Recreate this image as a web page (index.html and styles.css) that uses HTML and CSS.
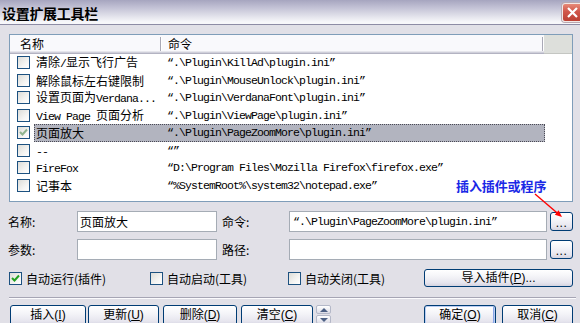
FILE: index.html
```html
<!DOCTYPE html>
<html>
<head>
<meta charset="utf-8">
<link rel="stylesheet" href="styles.css">
</head>
<body>
<div class="win">
  <div class="titlebar">
    <span class="title">设置扩展工具栏</span>
    <span class="close"><svg width="19" height="17" viewBox="0 0 19 17"><path d="M5 4 L14 13 M14 4 L5 13" stroke="#fff" stroke-width="2.2" fill="none"/></svg></span>
  </div>
  <div class="main">
    <div class="list">
      <div class="lhead">
        <div class="hc h1">名称</div>
        <div class="hsep"></div>
        <div class="hc h2">命令</div>
        <div class="hsep"></div>
        <div class="hfill"></div>
      </div>
      <div class="row"><span class="cb"></span><span class="item"><span class="nm">清除<span class="en">/</span>显示飞行广告</span><span class="cmd">“.\Plugin\KillAd\plugin.ini”</span></span></div>
      <div class="row"><span class="cb"></span><span class="item"><span class="nm">解除鼠标左右键限制</span><span class="cmd">“.\Plugin\MouseUnlock\plugin.ini”</span></span></div>
      <div class="row"><span class="cb"></span><span class="item"><span class="nm">设置页面为<span class="en">Verdana...</span></span><span class="cmd">“.\Plugin\VerdanaFont\plugin.ini”</span></span></div>
      <div class="row"><span class="cb"></span><span class="item"><span class="nm"><span class="en">View Page </span>页面分析</span><span class="cmd">“.\Plugin\ViewPage\plugin.ini”</span></span></div>
      <div class="row"><span class="cb cb-sel"><svg width="11" height="11" viewBox="0 0 11 11"><path d="M2 5 L4.5 7.5 L9 2.5" stroke="#8fb48f" stroke-width="2" fill="none"/></svg></span><span class="item selected"><span class="nm">页面放大</span><span class="cmd">“.\Plugin\PageZoomMore\plugin.ini”</span></span></div>
      <div class="row"><span class="cb"></span><span class="item"><span class="nm"><span class="en">--</span></span><span class="cmd">“”</span></span></div>
      <div class="row"><span class="cb"></span><span class="item"><span class="nm"><span class="en">FireFox</span></span><span class="cmd">“D:\Program Files\Mozilla Firefox\firefox.exe”</span></span></div>
      <div class="row"><span class="cb"></span><span class="item"><span class="nm">记事本</span><span class="cmd">“%SystemRoot%\system32\notepad.exe”</span></span></div>
    </div>

    <div class="frow first">
      <span class="lbl lbl1">名称:</span>
      <span class="input in1">页面放大</span>
      <span class="lbl lbl2">命令:</span>
      <span class="input in2"><span class="en">“.\Plugin\PageZoomMore\plugin.ini”</span></span>
      <span class="btn dots">...</span>
    </div>
    <div class="frow second">
      <span class="lbl lbl1">参数:</span>
      <span class="input in1"></span>
      <span class="lbl lbl2">路径:</span>
      <span class="input in2"></span>
      <span class="btn dots">...</span>
    </div>

    <div class="crow">
      <span class="chk c1"><span class="cb"><svg width="11" height="11" viewBox="0 0 11 11"><path d="M2 5 L4.5 7.5 L9 2.5" stroke="#21a121" stroke-width="2" fill="none"/></svg></span>自动运行(插件)</span>
      <span class="chk c2"><span class="cb"></span>自动启动(工具)</span>
      <span class="chk c3"><span class="cb"></span>自动关闭(工具)</span>
      <span class="btn imp">导入插件(<u>P</u>)...</span>
    </div>

    <div class="sep"></div>

    <div class="brow">
      <span class="btn b1">插入(<u>I</u>)</span>
      <span class="btn b2">更新(<u>U</u>)</span>
      <span class="btn b3">删除(<u>D</u>)</span>
      <span class="btn b4">清空(<u>C</u>)</span>
      <span class="spin"><span class="sp up"></span><span class="sp down"></span></span>
      <span class="btn ok">确定(<u>O</u>)</span>
      <span class="btn cancel">取消(<u>C</u>)</span>
    </div>
  </div>

  <div class="note">插入插件或程序</div>
  <svg class="arrow" width="40" height="32" viewBox="0 0 40 32">
    <path d="M5 4 L29 24.5" stroke="#f00" stroke-width="1.4" fill="none"/>
    <polygon points="32,27 24.8,24.8 28.6,20.2" fill="#f00"/>
  </svg>
</div>
</body>
</html>
```
FILE: styles.css
```css
* { box-sizing: border-box; }
html, body { margin: 0; padding: 0; }
body {
  width: 580px;
  height: 323px;
  overflow: hidden;
  background: #e1e0e7;
  font-family: "Liberation Sans", "Noto Sans CJK SC", sans-serif;
  font-size: 12px;
  line-height: 15px;
  color: #000;
}
.win { position: relative; width: 580px; height: 323px; overflow: hidden; }

.titlebar {
  height: 25px;
  display: flex;
  align-items: center;
  justify-content: space-between;
  padding-left: 2px;
  background: linear-gradient(#a6a5bf, #c1c0d4 30%, #e6e6ee 72%, #f7f7fa 92%);
  border-bottom: 1px solid #8d8ca5;
}
.title {
  font-family: "Noto Sans CJK SC", sans-serif;
  font-weight: 700;
  font-size: 14px;
  line-height: 16px;
  letter-spacing: -0.3px;
  margin-top: 1px;
}
.close {
  width: 21px;
  height: 19px;
  margin-right: -3px;
  margin-top: 1px;
  border: 1px solid #f2e8e6;
  border-radius: 3px;
  background: linear-gradient(#e68a78, #d0564a 45%, #bb4034);
  display: flex;
  align-items: center;
  justify-content: center;
  box-shadow: 0 0 0 1px #b9a8b0;
}

.main { padding: 9px 0 0 9px; }

.list {
  width: 564px;
  height: 168px;
  border: 1px solid #7f9db9;
  background: #fff;
  font-family: "Noto Sans CJK SC", sans-serif;
}
.lhead {
  height: 19px;
  display: flex;
  align-items: center;
  background: #f9f9fc;
  box-shadow: inset 0 -1px #b3b3c2, inset 0 -2px #cfcfda, inset 0 -3px #e6e6ec;
}
.hc { height: 100%; display: flex; align-items: center; padding-bottom: 2px; }
.h1 { width: 150px; padding-left: 10px; }
.h2 { width: 380px; padding-left: 6px; }
.hsep {
  width: 2px;
  height: 14px;
  margin-bottom: 2px;
  background: linear-gradient(to right, #a9a9b6 50%, #fff 50%);
}
.hfill {
  flex: 1;
  height: 100%;
  background: #dddfdb;
  box-shadow: inset 0 -1px #c4c6c2;
}

.row {
  height: 17.5px;
  display: flex;
  align-items: center;
  padding-left: 7px;
}
.cb {
  width: 13px;
  height: 13px;
  flex: none;
  border: 1px solid #1c5180;
  background: linear-gradient(135deg, #dcdcd7 0%, #f4f4f2 60%, #fff 100%);
  display: flex;
  align-items: center;
  justify-content: center;
}
.row .cb { margin-right: 4px; }
.item {
  width: 511px;
  height: 100%;
  display: flex;
  align-items: center;
  padding-left: 1px;
  border: 1px dotted transparent;
}
.item.selected {
  background: #b2b4bf;
  border-color: #4a4a55;
}
.nm { width: 131px; white-space: nowrap; overflow: hidden; }
.cmd, .en {
  font-family: "Liberation Mono", monospace;
  font-size: 11.5px;
  letter-spacing: -0.9px;
  white-space: pre;
}

.frow {
  display: flex;
  align-items: center;
  height: 21px;
}
.frow.first { margin-top: 9px; }
.frow.second { margin-top: 7px; }
.lbl { font-family: "Noto Sans CJK SC", sans-serif; }
.lbl1 { width: 69px; margin-left: -1px; }
.lbl2 { width: 67px; margin-left: 5px; }
.input {
  height: 21px;
  border: 1px solid #a5acb5;
  background: #fff;
  display: flex;
  align-items: center;
  padding-left: 2px;
  font-family: "Noto Sans CJK SC", sans-serif;
  white-space: nowrap;
}
.in1 { width: 140px; }
.in2 { width: 258px; padding-left: 3px; }

.btn {
  display: flex;
  align-items: center;
  justify-content: center;
  border: 1px solid #003c74;
  border-radius: 3px;
  background: linear-gradient(#ffffff, #f4f4f8 40%, #e6e5ee 80%, #d4d3e0);
  font-family: "Liberation Sans", "Noto Sans CJK SC", sans-serif;
  white-space: nowrap;
}
.dots {
  width: 23px;
  height: 19px;
  margin-left: 3px;
  font-size: 12px;
  letter-spacing: 0.5px;
  padding-top: 3px;
}

.crow {
  display: flex;
  align-items: center;
  height: 18px;
  margin-top: 9px;
}
.chk {
  display: flex;
  align-items: center;
  font-family: "Noto Sans CJK SC", sans-serif;
}
.chk .cb { margin-right: 4px; }
.c1 { width: 141px; }
.c2 { width: 139px; }
.c3 { width: 135px; margin-left: -1px; }
.imp { width: 149px; height: 18px; margin-left: 1px; }

.sep {
  width: 567px;
  height: 2px;
  margin-top: 10px;
  border-top: 1px solid #a6a5b4;
  border-bottom: 1px solid #fbfbfd;
}

.brow {
  display: flex;
  align-items: flex-start;
  margin-top: 6px;
  height: 21px;
}
.brow .btn { height: 21px; }
.b1 { width: 76px; margin-left: 1px; }
.b2 { width: 71px; margin-left: 2px; }
.b3 { width: 74px; margin-left: 4px; }
.b4 { width: 72px; margin-left: 4px; }
.spin {
  width: 15px;
  margin-left: 3px;
  display: flex;
  flex-direction: column;
  gap: 1px;
}
.sp {
  height: 9px;
  border: 1px solid #b4b8c8;
  border-radius: 2px;
  background: linear-gradient(#ffffff, #dcdce6);
  display: flex;
  align-items: center;
  justify-content: center;
}
.sp.up::after {
  content: "";
  border-left: 4px solid transparent;
  border-right: 4px solid transparent;
  border-bottom: 4px solid #4d6185;
}
.sp.down::after {
  content: "";
  border-left: 4px solid transparent;
  border-right: 4px solid transparent;
  border-top: 4px solid #4d6185;
}
.ok {
  width: 72px;
  margin-left: 93px;
  box-shadow: inset 0 0 0 1px #b9cdf3, inset -1px -1px 0 1px #8aa6e6;
}
.cancel { width: 71px; margin-left: 6px; }

.note {
  position: absolute;
  left: 456px;
  top: 178px;
  font-family: "Noto Sans CJK SC", sans-serif;
  font-weight: 700;
  font-size: 13px;
  line-height: 15px;
  letter-spacing: -0.1px;
  color: #1a28e6;
  white-space: nowrap;
}
.arrow {
  position: absolute;
  left: 530px;
  top: 190px;
}
```
